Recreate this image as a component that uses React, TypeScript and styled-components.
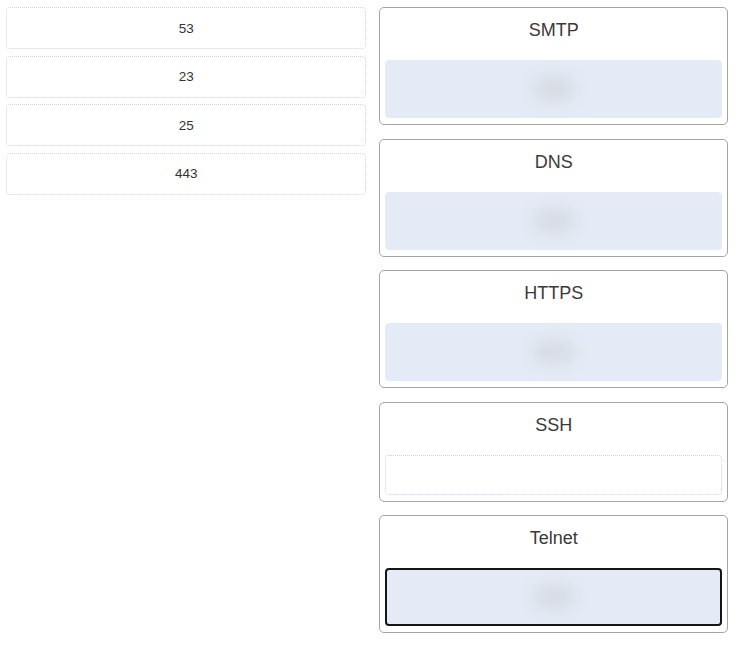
import React from "react";
import styled, { createGlobalStyle } from "styled-components";

const GlobalStyle = createGlobalStyle`
  body {
    margin: 0;
    background: #ffffff;
    font-family: "Liberation Sans", Arial, sans-serif;
  }
`;

const answers = ["53", "23", "25", "443"];

const targets = [
  { name: "SMTP", filled: true, active: false },
  { name: "DNS", filled: true, active: false },
  { name: "HTTPS", filled: true, active: false },
  { name: "SSH", filled: false, active: false },
  { name: "Telnet", filled: true, active: true },
];

const App = () => {
  return (
    <>
      <GlobalStyle />
      <Board>
        <Pool>
          {answers.map((a) => (
            <Chip key={a}>{a}</Chip>
          ))}
        </Pool>
        <Targets>
          {targets.map((t) => (
            <Card key={t.name}>
              <CardTitle>{t.name}</CardTitle>
              <DropZone $filled={t.filled} $active={t.active}>
                {t.filled && <Blur />}
              </DropZone>
            </Card>
          ))}
        </Targets>
      </Board>
    </>
  );
};

export default App;

const Board = styled.div`
  display: flex;
  align-items: flex-start;
  gap: 13px;
  padding: 7px 7px 0 6px;
`;

const Pool = styled.div`
  width: 361px;
  display: flex;
  flex-direction: column;
  gap: 6.6px;
`;

const Chip = styled.div`
  height: 40px;
  display: flex;
  align-items: center;
  justify-content: center;
  border: 1px dotted #cfd3da;
  border-radius: 4px;
  font-size: 13.5px;
  color: #333333;
`;

const Targets = styled.div`
  width: 349px;
  display: flex;
  flex-direction: column;
  gap: 13.5px;
`;

const Card = styled.div`
  border: 1px solid #a4a4a4;
  border-radius: 5px;
  padding: 0 5px 6px;
`;

const CardTitle = styled.div`
  padding-top: 11px;
  height: 41px;
  line-height: 22px;
  text-align: center;
  font-size: 18px;
  color: #3a3a3a;
`;

const DropZone = styled.div<{ $filled: boolean; $active: boolean }>`
  height: ${(p) => (p.$active ? "54px" : p.$filled ? "56px" : "38px")};
  display: flex;
  align-items: center;
  justify-content: center;
  border-radius: 4px;
  background: ${(p) => (p.$filled ? "#e5ebf6" : "#ffffff")};
  border: ${(p) =>
    p.$active
      ? "2px solid #151515"
      : p.$filled
      ? "1px solid #e5ebf6"
      : "1px dotted #cfd3da"};
  overflow: hidden;
`;

const Blur = styled.div`
  width: 42px;
  height: 24px;
  border-radius: 12px;
  background: #d6dbe3;
  filter: blur(8px);
`;
